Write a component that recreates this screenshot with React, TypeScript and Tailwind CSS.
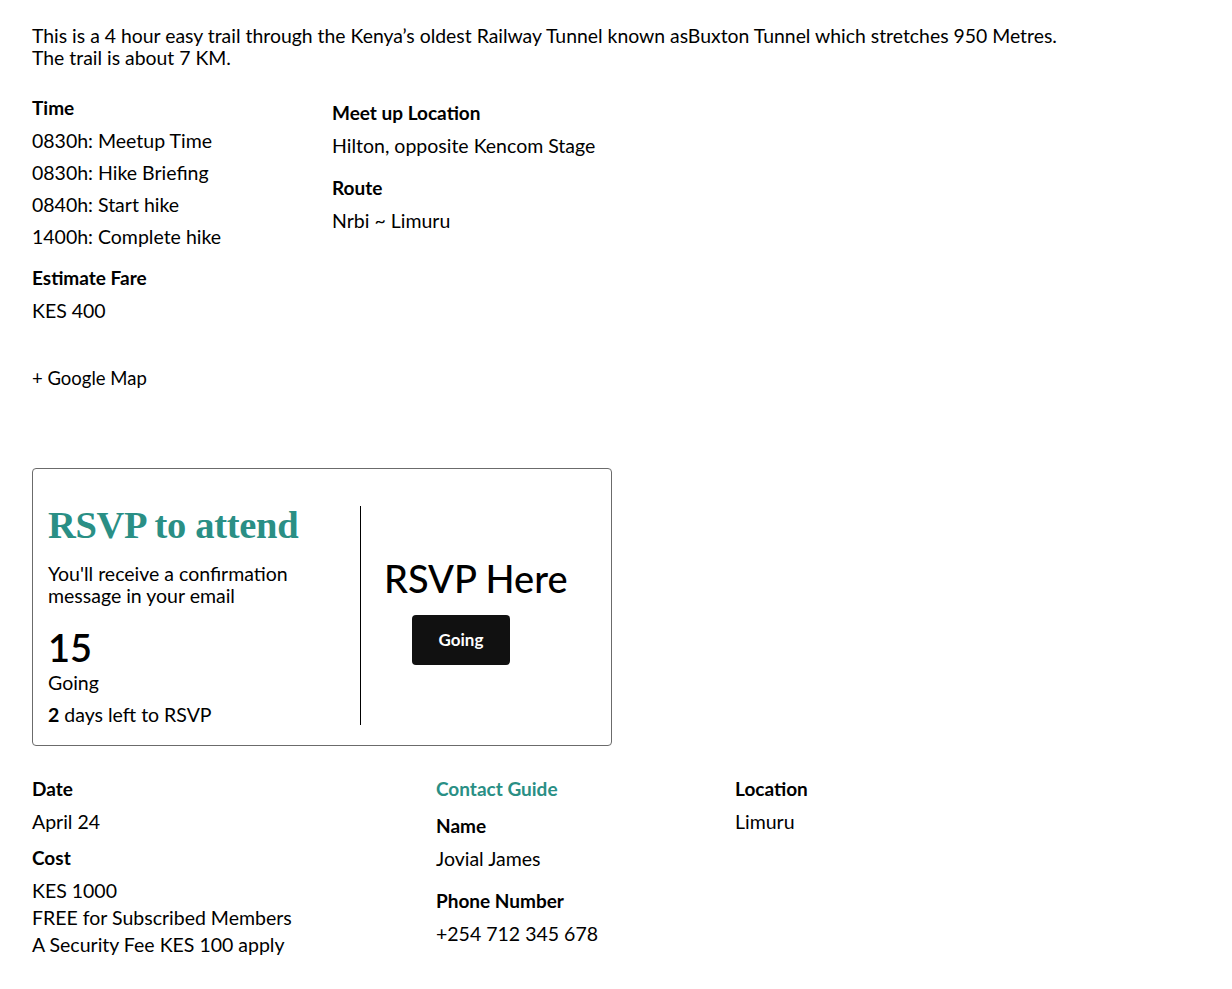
import React from "react";

const sans = "font-['Lato','Noto_Sans',sans-serif]";

function Label({ children, className = "" }: { children: React.ReactNode; className?: string }) {
  return <div className={`font-bold text-[19px] leading-[22px] text-black ${className}`}>{children}</div>;
}

function Val({ children, className = "" }: { children: React.ReactNode; className?: string }) {
  return <div className={`text-[19.5px] leading-[22px] text-black ${className}`}>{children}</div>;
}

export default function App() {
  return (
    <div className={`${sans} bg-white min-h-[989px] w-[1232px] px-[32px] pt-[25px] text-black`}>
      <p className="text-[19.4px] leading-[22px]">
        This is a 4 hour easy trail through the Kenya’s oldest Railway Tunnel known asBuxton Tunnel which stretches 950 Metres.
        <br />
        The trail is about 7 KM.
      </p>

      <div className="flex mt-[28px]">
        <div className="w-[300px]">
          <Label>Time</Label>
          <Val className="mt-[11px]">0830h: Meetup Time</Val>
          <Val className="mt-[10px]">0830h: Hike Briefing</Val>
          <Val className="mt-[10px]">0840h: Start hike</Val>
          <Val className="mt-[10px]">1400h: Complete hike</Val>
          <Label className="mt-[19px]">Estimate Fare</Label>
          <Val className="mt-[11px]">KES 400</Val>
        </div>
        <div className="pt-[5px]">
          <Label>Meet up Location</Label>
          <Val className="mt-[11px]">Hilton, opposite Kencom Stage</Val>
          <Label className="mt-[20px]">Route</Label>
          <Val className="mt-[11px]">Nrbi ~ Limuru</Val>
        </div>
      </div>

      <div className="mt-[46px] text-[18.5px] leading-[20px]">+ Google Map</div>

      <div className="mt-[80px] w-[580px] h-[278px] border border-[#6b6b6b] rounded-[4px] flex pt-[37px] pb-[20px]">
        <div className="w-[328px] border-r border-black pl-[15px]">
          <h2 className="font-['Liberation_Serif','DejaVu_Serif',serif] font-bold text-[38.5px] leading-[38px] text-[#2a8f85] tracking-[-0.3px]">
            RSVP to attend
          </h2>
          <p className="mt-[19px] text-[19.5px] leading-[22px]">
            You'll receive a confirmation
            <br />
            message in your email
          </p>
          <div className="mt-[20px] text-[38px] leading-[40px] font-semibold">15</div>
          <Val className="mt-[5px]">Going</Val>
          <Val className="mt-[10px]">
            <span className="font-bold">2</span> days left to RSVP
          </Val>
        </div>
        <div className="pl-[23px] pt-[52px]">
          <div className="text-[38px] leading-[40px] font-medium">RSVP Here</div>
          <button className="mt-[17px] ml-[28px] w-[98px] h-[50px] bg-[#111111] rounded-[4px] text-white font-bold text-[17px]">
            Going
          </button>
        </div>
      </div>

      <div className="flex mt-[32px]">
        <div className="w-[404px]">
          <Label>Date</Label>
          <Val className="mt-[11px]">April 24</Val>
          <Label className="mt-[14px]">Cost</Label>
          <Val className="mt-[11px]">KES 1000</Val>
          <Val className="mt-[5px]">FREE for Subscribed Members</Val>
          <Val className="mt-[5px]">A Security Fee KES 100 apply</Val>
        </div>
        <div className="w-[299px]">
          <div className="font-bold text-[19px] leading-[22px] text-[#2a8f85]">Contact Guide</div>
          <Label className="mt-[15px]">Name</Label>
          <Val className="mt-[11px]">Jovial James</Val>
          <Label className="mt-[20px]">Phone Number</Label>
          <Val className="mt-[11px]">+254 712 345 678</Val>
        </div>
        <div>
          <Label>Location</Label>
          <Val className="mt-[11px]">Limuru</Val>
        </div>
      </div>
    </div>
  );
}
